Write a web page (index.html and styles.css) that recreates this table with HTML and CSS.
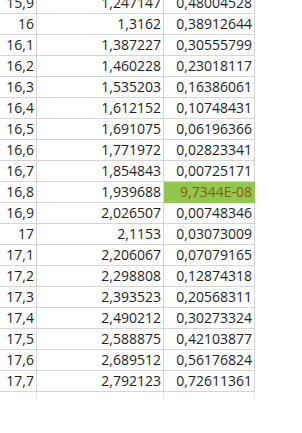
FILE: index.html
```html
<!DOCTYPE html>
<html>
<head>
<meta charset="utf-8">
<link rel="stylesheet" href="styles.css">
</head>
<body>
<div class="sheet">
  <div class="row"><div class="c a">15,9</div><div class="c b">1,247147</div><div class="c d">0,48004528</div></div>
  <div class="row"><div class="c a">16</div><div class="c b">1,3162</div><div class="c d">0,38912644</div></div>
  <div class="row"><div class="c a">16,1</div><div class="c b">1,387227</div><div class="c d">0,30555799</div></div>
  <div class="row"><div class="c a">16,2</div><div class="c b">1,460228</div><div class="c d">0,23018117</div></div>
  <div class="row"><div class="c a">16,3</div><div class="c b">1,535203</div><div class="c d">0,16386061</div></div>
  <div class="row"><div class="c a">16,4</div><div class="c b">1,612152</div><div class="c d">0,10748431</div></div>
  <div class="row"><div class="c a">16,5</div><div class="c b">1,691075</div><div class="c d">0,06196366</div></div>
  <div class="row"><div class="c a">16,6</div><div class="c b">1,771972</div><div class="c d">0,02823341</div></div>
  <div class="row"><div class="c a">16,7</div><div class="c b">1,854843</div><div class="c d">0,00725171</div></div>
  <div class="row"><div class="c a">16,8</div><div class="c b">1,939688</div><div class="c d good">9,7344E-08</div></div>
  <div class="row"><div class="c a">16,9</div><div class="c b">2,026507</div><div class="c d">0,00748346</div></div>
  <div class="row"><div class="c a">17</div><div class="c b">2,1153</div><div class="c d">0,03073009</div></div>
  <div class="row"><div class="c a">17,1</div><div class="c b">2,206067</div><div class="c d">0,07079165</div></div>
  <div class="row"><div class="c a">17,2</div><div class="c b">2,298808</div><div class="c d">0,12874318</div></div>
  <div class="row"><div class="c a">17,3</div><div class="c b">2,393523</div><div class="c d">0,20568311</div></div>
  <div class="row"><div class="c a">17,4</div><div class="c b">2,490212</div><div class="c d">0,30273324</div></div>
  <div class="row"><div class="c a">17,5</div><div class="c b">2,588875</div><div class="c d">0,42103877</div></div>
  <div class="row"><div class="c a">17,6</div><div class="c b">2,689512</div><div class="c d">0,56176824</div></div>
  <div class="row"><div class="c a">17,7</div><div class="c b">2,792123</div><div class="c d">0,72611361</div></div>
  <div class="row stub"><div class="c a"></div><div class="c b"></div><div class="c d"></div></div>
</div>
</body>
</html>
```
FILE: styles.css
```css
html, body {
  margin: 0;
  padding: 0;
  background: #ffffff;
}
.sheet {
  margin-top: -7px;
  font-family: "Open Sans", "Liberation Sans", sans-serif;
  font-size: 14px;
  color: #1e1e1e;
}
.row {
  display: grid;
  grid-template-columns: 37px 127px 91px;
  height: 21px;
}
.c {
  box-sizing: border-box;
  border-right: 1px solid #d6d6d6;
  border-bottom: 1px solid #d6d6d6;
  text-align: right;
  line-height: 20px;
  padding-right: 2px;
  white-space: nowrap;
  overflow: hidden;
}
.good {
  background: #92c64f;
  border-color: #92c64f;
  color: #8a5a12;
}
.stub {
  height: 7px;
}
.stub .c {
  border-bottom: none;
  border-right-color: #e6e6e6;
}
```
